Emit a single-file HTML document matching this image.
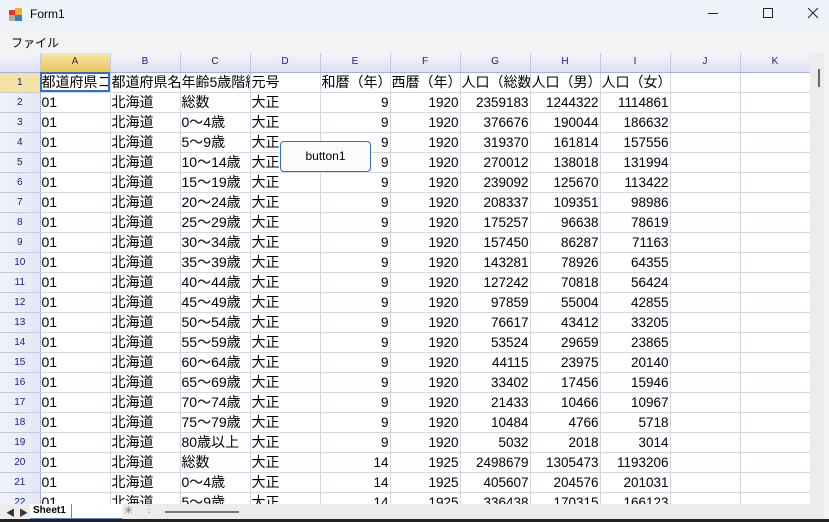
<!DOCTYPE html>
<html><head><meta charset="utf-8"><style>
*{margin:0;padding:0;box-sizing:border-box}
body{width:829px;height:522px;overflow:hidden;background:#f0f0f0;font-family:"Liberation Sans","Noto Sans CJK JP",sans-serif;position:relative}
#title{position:absolute;left:0;top:0;width:829px;height:29px;background:#eef2f9}
#title .t{position:absolute;left:30px;top:7px;font-size:12px;color:#000}
#menu{position:absolute;left:0;top:29px;width:829px;height:24px;background:#f3f3f3;font-size:12px}
#menu span{position:absolute;left:11px;top:5px}
#grid{position:absolute;left:0;top:53px;width:810px;height:451px;overflow:hidden;background:#fff}
table{border-collapse:collapse;table-layout:fixed;font-size:14px;width:810px}
td{height:20px;border-right:1px solid #d0d7e5;border-bottom:1px solid #d0d7e5;white-space:nowrap;overflow:hidden;padding:0 1px;color:#000;line-height:19px;text-overflow:clip}
td.r{text-align:right;font-size:13.5px}
tr.h td{height:19px;background:linear-gradient(#f4f5fb,#dde0f2);color:#1a1a8c;font-size:10px;text-align:center;border-right:1px solid #c5c9e0;border-bottom:1px solid #a9b0d3;line-height:18px}
td.rh{background:linear-gradient(90deg,#f2f4fb,#e3e7f6);color:#1a1a8c;font-size:10px;text-align:center;border-right:1px solid #a9b0d3;border-bottom:1px solid #c5c9e0}
tr.h td.sel{background:linear-gradient(#f6e7a8,#e9c55c);color:#333}
td.rsel{background:#f3e3a4 !important}
td.cur{outline:2px solid #2f6fc9;outline-offset:-2px}
#btn{position:absolute;left:280px;top:141px;width:91px;height:31px;border:1px solid #2f6fc9;border-radius:4px;background:#fbfbfb;font-size:12px;text-align:center;line-height:29px}
#vs{position:absolute;left:810px;top:53px;width:14px;height:466px;background:#ececec}
#vs i{position:absolute;left:8px;top:16px;width:2px;height:18px;background:#666}
#bb{position:absolute;left:0;top:504px;width:824px;height:15px;background:#ececec}
#edge{position:absolute;left:0;top:519px;width:829px;height:3px;background:#222}
#redge{position:absolute;left:824px;top:40px;width:5px;height:482px;background:#f4f4f4}
</style></head><body>
<div id="title"><svg style="position:absolute;left:9px;top:8px" width="14" height="14"><rect x="0" y="2" width="6" height="5" fill="#d33"/><rect x="6" y="0" width="7" height="7" fill="#f3b02a"/><rect x="0" y="7" width="6" height="6" fill="#aaa"/><rect x="6" y="7" width="7" height="6" fill="#3a7bd5"/></svg><span class="t">Form1</span>
<svg style="position:absolute;left:700px;top:6px" width="120" height="16"><line x1="8" y1="7.5" x2="18" y2="7.5" stroke="#222"/><rect x="63.5" y="2.5" width="9" height="9" fill="none" stroke="#222"/><path d="M108 2 L118 12 M118 2 L108 12" stroke="#222"/></svg></div>
<div id="menu"><span>ファイル</span></div>
<div id="redge"></div>
<div id="vs"><i></i></div>
<div id="grid"><table>
<colgroup><col style="width:40px"><col style="width:70px"><col style="width:70px"><col style="width:70px"><col style="width:70px"><col style="width:70px"><col style="width:70px"><col style="width:70px"><col style="width:70px"><col style="width:70px"><col style="width:70px"><col style="width:70px"></colgroup>
<tr class="h"><td></td><td class="sel">A</td><td>B</td><td>C</td><td>D</td><td>E</td><td>F</td><td>G</td><td>H</td><td>I</td><td>J</td><td>K</td></tr>
<tr><td class="rh rsel">1</td><td class="cur">都道府県コード</td><td>都道府県名</td><td>年齢5歳階級</td><td>元号</td><td>和暦（年）</td><td>西暦（年）</td><td>人口（総数）</td><td>人口（男）</td><td>人口（女）</td><td></td><td></td></tr>
<tr><td class="rh">2</td><td>01</td><td>北海道</td><td>総数</td><td>大正</td><td class="r">9</td><td class="r">1920</td><td class="r">2359183</td><td class="r">1244322</td><td class="r">1114861</td><td></td><td></td></tr>
<tr><td class="rh">3</td><td>01</td><td>北海道</td><td>0～4歳</td><td>大正</td><td class="r">9</td><td class="r">1920</td><td class="r">376676</td><td class="r">190044</td><td class="r">186632</td><td></td><td></td></tr>
<tr><td class="rh">4</td><td>01</td><td>北海道</td><td>5～9歳</td><td>大正</td><td class="r">9</td><td class="r">1920</td><td class="r">319370</td><td class="r">161814</td><td class="r">157556</td><td></td><td></td></tr>
<tr><td class="rh">5</td><td>01</td><td>北海道</td><td>10～14歳</td><td>大正</td><td class="r">9</td><td class="r">1920</td><td class="r">270012</td><td class="r">138018</td><td class="r">131994</td><td></td><td></td></tr>
<tr><td class="rh">6</td><td>01</td><td>北海道</td><td>15～19歳</td><td>大正</td><td class="r">9</td><td class="r">1920</td><td class="r">239092</td><td class="r">125670</td><td class="r">113422</td><td></td><td></td></tr>
<tr><td class="rh">7</td><td>01</td><td>北海道</td><td>20～24歳</td><td>大正</td><td class="r">9</td><td class="r">1920</td><td class="r">208337</td><td class="r">109351</td><td class="r">98986</td><td></td><td></td></tr>
<tr><td class="rh">8</td><td>01</td><td>北海道</td><td>25～29歳</td><td>大正</td><td class="r">9</td><td class="r">1920</td><td class="r">175257</td><td class="r">96638</td><td class="r">78619</td><td></td><td></td></tr>
<tr><td class="rh">9</td><td>01</td><td>北海道</td><td>30～34歳</td><td>大正</td><td class="r">9</td><td class="r">1920</td><td class="r">157450</td><td class="r">86287</td><td class="r">71163</td><td></td><td></td></tr>
<tr><td class="rh">10</td><td>01</td><td>北海道</td><td>35～39歳</td><td>大正</td><td class="r">9</td><td class="r">1920</td><td class="r">143281</td><td class="r">78926</td><td class="r">64355</td><td></td><td></td></tr>
<tr><td class="rh">11</td><td>01</td><td>北海道</td><td>40～44歳</td><td>大正</td><td class="r">9</td><td class="r">1920</td><td class="r">127242</td><td class="r">70818</td><td class="r">56424</td><td></td><td></td></tr>
<tr><td class="rh">12</td><td>01</td><td>北海道</td><td>45～49歳</td><td>大正</td><td class="r">9</td><td class="r">1920</td><td class="r">97859</td><td class="r">55004</td><td class="r">42855</td><td></td><td></td></tr>
<tr><td class="rh">13</td><td>01</td><td>北海道</td><td>50～54歳</td><td>大正</td><td class="r">9</td><td class="r">1920</td><td class="r">76617</td><td class="r">43412</td><td class="r">33205</td><td></td><td></td></tr>
<tr><td class="rh">14</td><td>01</td><td>北海道</td><td>55～59歳</td><td>大正</td><td class="r">9</td><td class="r">1920</td><td class="r">53524</td><td class="r">29659</td><td class="r">23865</td><td></td><td></td></tr>
<tr><td class="rh">15</td><td>01</td><td>北海道</td><td>60～64歳</td><td>大正</td><td class="r">9</td><td class="r">1920</td><td class="r">44115</td><td class="r">23975</td><td class="r">20140</td><td></td><td></td></tr>
<tr><td class="rh">16</td><td>01</td><td>北海道</td><td>65～69歳</td><td>大正</td><td class="r">9</td><td class="r">1920</td><td class="r">33402</td><td class="r">17456</td><td class="r">15946</td><td></td><td></td></tr>
<tr><td class="rh">17</td><td>01</td><td>北海道</td><td>70～74歳</td><td>大正</td><td class="r">9</td><td class="r">1920</td><td class="r">21433</td><td class="r">10466</td><td class="r">10967</td><td></td><td></td></tr>
<tr><td class="rh">18</td><td>01</td><td>北海道</td><td>75～79歳</td><td>大正</td><td class="r">9</td><td class="r">1920</td><td class="r">10484</td><td class="r">4766</td><td class="r">5718</td><td></td><td></td></tr>
<tr><td class="rh">19</td><td>01</td><td>北海道</td><td>80歳以上</td><td>大正</td><td class="r">9</td><td class="r">1920</td><td class="r">5032</td><td class="r">2018</td><td class="r">3014</td><td></td><td></td></tr>
<tr><td class="rh">20</td><td>01</td><td>北海道</td><td>総数</td><td>大正</td><td class="r">14</td><td class="r">1925</td><td class="r">2498679</td><td class="r">1305473</td><td class="r">1193206</td><td></td><td></td></tr>
<tr><td class="rh">21</td><td>01</td><td>北海道</td><td>0～4歳</td><td>大正</td><td class="r">14</td><td class="r">1925</td><td class="r">405607</td><td class="r">204576</td><td class="r">201031</td><td></td><td></td></tr>
<tr><td class="rh">22</td><td>01</td><td>北海道</td><td>5～9歳</td><td>大正</td><td class="r">14</td><td class="r">1925</td><td class="r">336438</td><td class="r">170315</td><td class="r">166123</td><td></td><td></td></tr>
</table></div>
<div id="btn">button1</div>
<div id="bb">
<span style="position:absolute;left:6px;top:2px;font-size:9px;color:#333">◀</span>
<span style="position:absolute;left:19px;top:2px;font-size:9px;color:#333">▶</span>
<div style="position:absolute;left:30px;top:0;width:42px;height:15px;background:#fff;border-right:1px solid #5b86c8;border-bottom:1px solid #5b86c8;font-size:10px;font-weight:bold;line-height:14px;padding-left:3px">Sheet1</div>
<div style="position:absolute;left:72px;top:0;width:50px;height:15px;background:#fff;border-bottom:1px solid #5b86c8"></div>
<span style="position:absolute;left:124px;top:0;font-size:11px;color:#777">✳</span>
<span style="position:absolute;left:144px;top:0;font-size:10px;color:#888">⋮</span>
<div style="position:absolute;left:165px;top:7px;width:74px;height:2px;background:#777"></div>
</div>
<div id="edge"></div>
</body></html>
